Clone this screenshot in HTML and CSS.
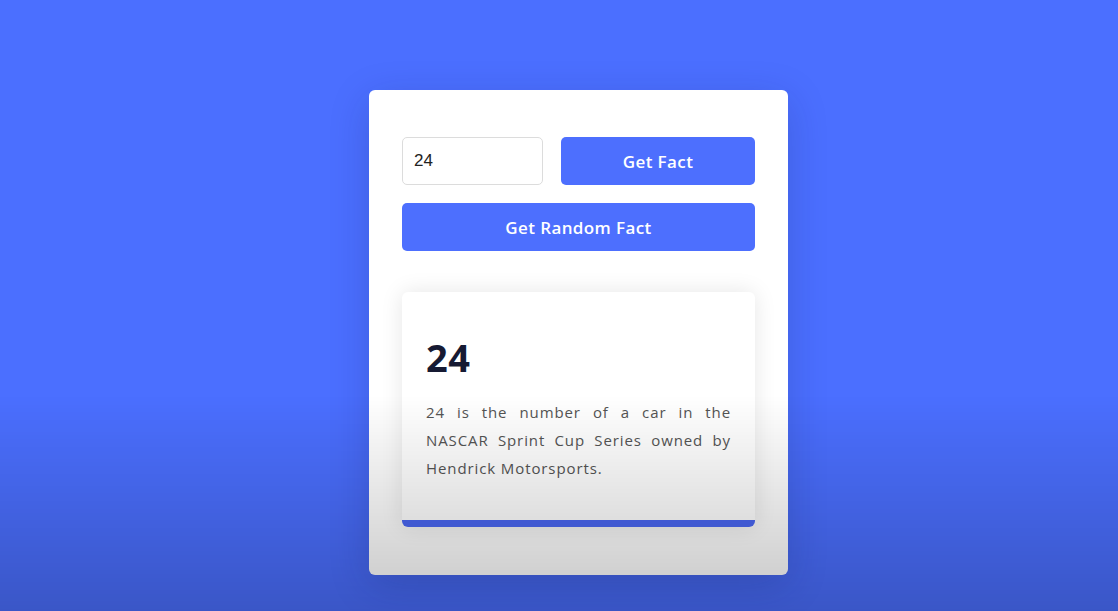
FILE: index.html
```html
<!DOCTYPE html>
<html lang="en">
<head>
  <meta charset="UTF-8">
  <meta name="viewport" content="width=device-width, initial-scale=1">
  <title>Number Facts</title>
  <link rel="stylesheet" href="styles.css">
</head>
<body>
<main class="page">
  <div class="container">
    <div class="search-row">
      <input class="num-input" type="number" value="24">
      <button class="btn btn-get">Get Fact</button>
    </div>
    <button class="btn btn-random">Get Random Fact</button>

    <div class="fact-card">
      <h2 class="fact-title">24</h2>
      <p class="fact-text">24 is the number of a car in the NASCAR Sprint Cup Series owned by Hendrick Motorsports.</p>
    </div>
  </div>
</main>
<div class="shade"></div>
</body>
</html>
```

FILE: styles.css
```css
html,
body {
  width: 100%;
  height: 100%;
}
body {
  margin: 0;
  background-color: #4b6fff;
  font-family: "Open Sans", "Noto Sans", sans-serif;
  overflow: hidden;
}
.page {
  padding: 90px 0 0 369px;
}
.container {
  width: 353px;
  padding: 47px 33px 48px;
  background-color: #fff;
  border-radius: 6px;
  box-shadow: 0 10px 40px rgba(20, 30, 90, 0.2);
}
.search-row {
  display: flex;
  gap: 18px;
}
.num-input {
  box-sizing: border-box;
  width: 141px;
  height: 48px;
  padding: 0 11px;
  border: 1px solid #dcdcdc;
  border-radius: 5px;
  font-family: "Liberation Sans", Arial, sans-serif;
  font-size: 17px;
  color: #222;
  outline: none;
  -moz-appearance: textfield;
}
.num-input::-webkit-inner-spin-button,
.num-input::-webkit-outer-spin-button {
  -webkit-appearance: none;
  margin: 0;
}
.btn {
  height: 48px;
  border: none;
  border-radius: 5px;
  background-color: #4d6ffe;
  color: #fff;
  font-family: "Open Sans", "Noto Sans", sans-serif;
  font-size: 17px;
  font-weight: 600;
  letter-spacing: 0.4px;
  cursor: pointer;
}
.btn-get {
  flex: 1;
}
.btn-random {
  display: block;
  width: 100%;
  margin-top: 18px;
}
.fact-card {
  margin-top: 41px;
  padding: 44px 24px 38px;
  border-bottom: 7px solid #4a67f2;
  border-radius: 6px;
  box-shadow: 0 0 22px rgba(0, 0, 0, 0.1);
}
.fact-title {
  margin: 0;
  font-size: 38px;
  line-height: 43px;
  font-weight: 700;
  letter-spacing: 0.5px;
  color: #161a33;
}
.fact-text {
  margin: 19px 0 0;
  font-size: 15px;
  line-height: 28px;
  letter-spacing: 0.9px;
  text-align: justify;
  color: #555;
}
/* video style darkening at the bottom */
.shade {
  position: fixed;
  left: 0;
  top: 0;
  width: 100%;
  height: 100%;
  pointer-events: none;
  background: linear-gradient(to bottom, rgba(0, 0, 0, 0) 0, rgba(0, 0, 0, 0) 395px, rgba(0, 0, 0, 0.22) 611px);
}
```
